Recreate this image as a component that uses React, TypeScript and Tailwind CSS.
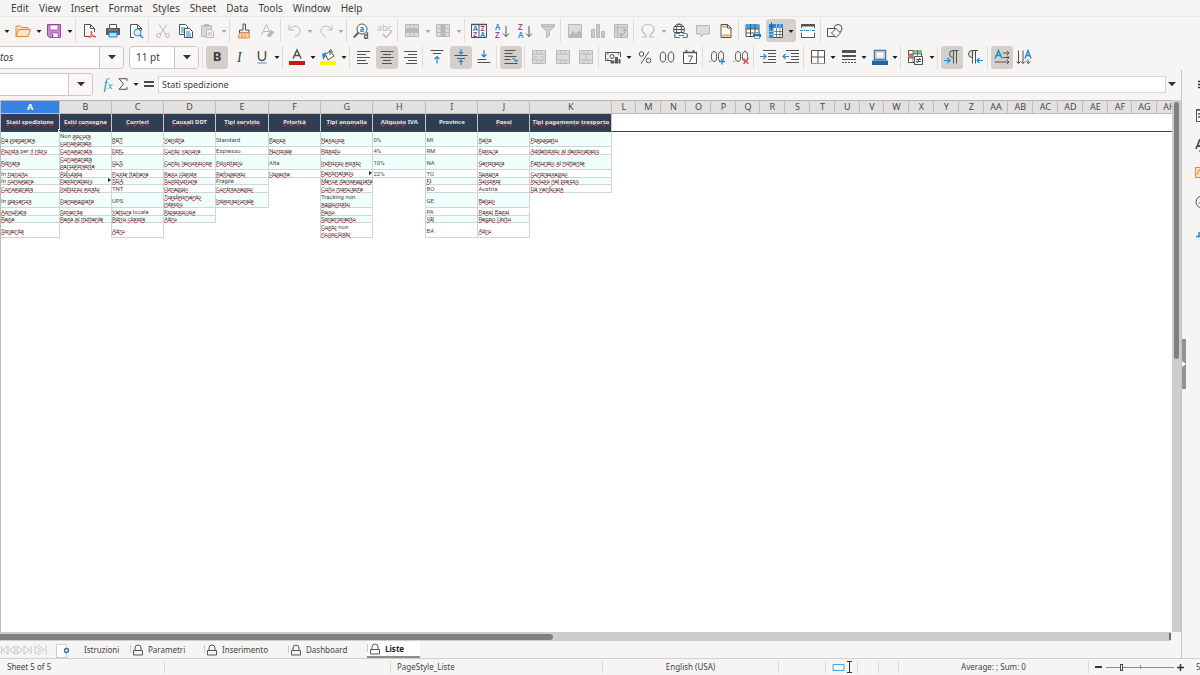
import type { ReactNode } from 'react';
import clsx from 'clsx';

const INK = '#525252';
const DIM = '#b9b9b7';
const BLUE = '#1e8bcd';
const PURPLE = '#a33ea1';
const ORANGE = '#e8873a';

const menus = ['Edit', 'View', 'Insert', 'Format', 'Styles', 'Sheet', 'Data', 'Tools', 'Window', 'Help'];

const icons: Record<string, ReactNode> = {
  open: (
    <>
      <path d="M1 13.500V3h4.500l1.500 1.500h6V7" fill="#f8dcb4" stroke={ORANGE} />
      <path d="M1 13.500 3.500 6.500h12l-2.500 7z" fill="#fbe3bd" stroke={ORANGE} />
    </>
  ),
  save: (
    <>
      <path d="M1.500 1.500h13v13h-11l-2-2z" fill="#c98bcb" stroke={PURPLE} />
      <path d="M4 2h8v5H4zM5 10h7v4.500H5z" fill="#fff" stroke={PURPLE} strokeWidth=".7" />
      <path d="M6.500 11v3.500" stroke={PURPLE} strokeWidth="1.500" />
    </>
  ),
  pdf: (
    <>
      <path d="M2.500 1.500h6l4 4V9M8.500 1.500v4h4M2.500 1.500v12H7" fill="none" stroke={INK} />
      <path d="M7 14.500c2-2 3.500-5 2.500-6s-1 4 4.500 5.500c-2-1.500-5-.5-7 .5z" fill="none" stroke="#dc3a35" />
    </>
  ),
  print: (
    <>
      <path d="M4.500 5V1.500h7V5" fill="#fff" stroke={INK} />
      <path d="M1 5h14v7H1z" fill="#5b5b5b" />
      <path d="M3 7h10" stroke="#9a9a9a" />
      <path d="M4 9.500h8v4.500H4z" fill="#b7ddf3" stroke={BLUE} />
    </>
  ),
  preview: (
    <>
      <path d="M6 14.500H2.500v-13h7l4 4v2M9.500 1.500v4h4" fill="#fff" stroke={INK} />
      <circle cx="9.500" cy="9.500" r="3.500" fill="#dff0fa" stroke={BLUE} />
      <path d="m12 12 3 3" stroke={BLUE} strokeWidth="1.500" />
    </>
  ),
  cut: (
    <g fill="none" stroke={DIM}>
      <path d="m4 1.500 7 10M12 1.500l-7 10" />
      <circle cx="3.500" cy="12.500" r="2" />
      <circle cx="12.500" cy="12.500" r="2" />
    </g>
  ),
  copy: (
    <>
      <path d="M1.500 1.500h6l2 2v8h-8z" fill="#fff" stroke={INK} />
      <path d="M3 5h4M3 7h4M3 9h3" stroke={BLUE} />
      <path d="M6.500 5.500h5l3 3v6h-8z" fill="#fff" stroke={INK} />
      <path d="M8 9h4M8 11h5M8 13h5" stroke={BLUE} />
    </>
  ),
  paste: (
    <>
      <path d="M1.500 2.500h10v11h-10z" fill="#d8d8d6" stroke={DIM} />
      <path d="M4 1h5v3H4z" fill={DIM} />
      <path d="M6.500 6.500h5l2 2v6h-7z" fill="#f3f3f1" stroke={DIM} />
      <path d="M8 10h4M8 12h4" stroke={DIM} />
    </>
  ),
  brush: (
    <>
      <path d="M7 1h2.500v6H13v3H3.500V7H7z" fill="#eee" stroke={INK} />
      <path d="M3.500 10h9.500l.5 5h-11z" fill="#f8d7ae" stroke={ORANGE} />
      <path d="M6 11.500V15M9 11.500V15" stroke={ORANGE} />
    </>
  ),
  clear: (
    <>
      <path d="m1.500 12 5-10.500L10 9M3.500 8.500H9" fill="none" stroke={DIM} />
      <path d="m7 12 4-5 3.500 2-4 5H8z" fill={DIM} />
    </>
  ),
  undo: <path d="M2 2v5h5M2 7c3-5 10-5 11 0 .5 3-2 5.500-5 7" fill="none" stroke={DIM} />,
  redo: <path d="M14 2v5H9M14 7c-3-5-10-5-11 0-.5 3 2 5.500 5 7" fill="none" stroke={DIM} />,
  find: (
    <>
      <circle cx="9" cy="6" r="5" fill="#fff" stroke={INK} />
      <path d="M5.500 9.500.8 14.300" stroke={INK} strokeWidth="1.800" />
      <text x="6.500" y="8.500" fontSize="8" fontWeight="700" fill={BLUE}>a</text>
      <text x="10.500" y="15.500" fontSize="8" fontWeight="700" fill={INK}>d</text>
    </>
  ),
  spell: (
    <>
      <text x="0" y="8" fontSize="9" fill={DIM}>abc</text>
      <path d="m6 11 3 3.500 6-6.500" fill="none" stroke={DIM} strokeWidth="1.400" />
    </>
  ),
  rows: (
    <>
      <path d="M1.500 1.500h13v12h-13z" fill="#ddd" stroke={DIM} />
      <path d="M1 5.500h14M1 9.500h14M6 1v13M10 1v13" stroke={DIM} />
      <path d="M2 6h12v3H2z" fill={DIM} />
    </>
  ),
  cols: (
    <>
      <path d="M1.500 1.500h13v12h-13z" fill="#ddd" stroke={DIM} />
      <path d="M1 5.500h14M1 9.500h14M6 1v13M10 1v13" stroke={DIM} />
      <path d="M6 2h4v12H6z" fill={DIM} />
    </>
  ),
  sort: (
    <>
      <path d="M.5 1.500h15v13H.500zM8 1.500v13" fill="#fff" stroke={INK} />
      <path d="M0 1.500h16" stroke={INK} strokeWidth="1.500" />
      <text x="2" y="8" fontSize="7" fontWeight="700" fill={BLUE}>A</text>
      <text x="2" y="14" fontSize="7" fontWeight="700" fill={PURPLE}>Z</text>
      <text x="9.500" y="8" fontSize="7" fontWeight="700" fill={PURPLE}>Z</text>
      <text x="9.300" y="14" fontSize="7" fontWeight="700" fill={BLUE}>A</text>
    </>
  ),
  asc: (
    <>
      <text x="1" y="7" fontSize="8" fontWeight="600" fill={BLUE}>A</text>
      <text x="1" y="15" fontSize="8" fontWeight="600" fill={PURPLE}>Z</text>
      <path d="M12 3v10.500M9 10.500l3 3 3-3" fill="none" stroke={INK} />
    </>
  ),
  desc: (
    <>
      <text x="1" y="7" fontSize="8" fontWeight="600" fill={PURPLE}>Z</text>
      <text x="1" y="15" fontSize="8" fontWeight="600" fill={BLUE}>A</text>
      <path d="M12 3v10.500M9 10.500l3 3 3-3" fill="none" stroke={INK} />
    </>
  ),
  filter: <path d="M1.500 1.500h13v2l-5 5v4l-3 2v-6l-5-5zM2 3.500h12" fill="#cfcfcd" stroke={DIM} />,
  image: (
    <>
      <path d="M1.500 1.500h13v13h-13z" fill="#dcdcda" stroke={DIM} />
      <path d="m2 13 4-5 3 3 3-4 2.500 3v4H2z" fill={DIM} />
    </>
  ),
  chart: <path d="M1.500 6.500h3v8h-3zM6.500 1.500h3v13h-3zM11.500 8.500h3v6h-3z" fill="#cbcbc9" stroke={DIM} />,
  pivot: (
    <>
      <path d="M1.500 1.500h13v13h-13z" fill="#d4d4d2" stroke={DIM} />
      <path d="M1 4.500h14M4.500 1v14" stroke={DIM} />
      <path d="M7 12c4 0 5-2 5-5M10 8l2-2 2 2M8.500 10 7 12l2 1.500" fill="none" stroke="#a5a5a3" />
    </>
  ),
  omega: <path d="M1.500 14h4.500v-2C3 10 2 8.500 2 6.500 2 3.500 4.500 1.500 8 1.500s6 2 6 5c0 2-1 3.500-4 5.500v2h4.500" fill="none" stroke={DIM} strokeWidth="1.200" />,
  link: (
    <>
      <g fill="none" stroke={INK}>
        <circle cx="7" cy="6.500" r="5.500" />
        <ellipse cx="7" cy="6.500" rx="2.500" ry="5.500" />
        <path d="M1.500 6.500h11M2.500 3.500h9M2.500 9.500h9" />
      </g>
      <path d="M3 10h12v5H3z" fill="#f6f5f4" />
      <path d="M8 10.500H4.500a2 2 0 0 0 0 4H8M10.500 10.500h3a2 2 0 0 1 0 4h-3M6.500 12.500h5.500" fill="none" stroke={BLUE} strokeWidth="1.200" />
    </>
  ),
  comment: <path d="M1.500 2.500h13v8.500H9L6 14v-3H1.500z" fill="#dcdcda" stroke={DIM} />,
  headfoot: (
    <>
      <path d="M3 1.500h6.500l3.500 3.500v9.500H3zM9.500 1.500V5H13" fill="#fff" stroke={INK} />
      <path d="M4 2.500h5v2H4zM4 11.500h8v2H4z" fill="#f0a455" />
    </>
  ),
  range: (
    <>
      <path d="M1 1.500h13v12H1z" fill="#fff" stroke={INK} />
      <path d="M1 1h13v5H1z" fill="#4aa3df" />
      <path d="M1 6h13M1 10h13M5.500 1v13M10 1v13" stroke={INK} />
      <path d="M8 11h8v3H8z" fill="#5b5b5b" />
      <path d="M9.500 9.500h5V11h-5zM9.500 13h5v2.500h-5z" fill="#fff" stroke={BLUE} strokeWidth=".7" />
    </>
  ),
  freeze: (
    <>
      <path d="M1.500 1.500h13v13h-13z" fill="#fff" stroke={INK} />
      <path d="M1 1h14v4H1zM1 1h4.500v14H1z" fill="#2f8fd4" />
      <path d="M6 8.500h9M6 11.500h9M8.500 5v10M12 5v10" stroke={INK} strokeWidth=".7" />
      <path d="M1 8.500h4M1 11.500h4M8.500 1v4M12 1v4" stroke="#bfe0f5" strokeWidth=".7" />
      <path d="M3.500-.5V6M.5 3h6" stroke="#1664a5" />
    </>
  ),
  split: (
    <>
      <path d="M1.500 5V1.500h13V5M1.500 10v4.500h13V10" fill="#fff" stroke={INK} />
      <path d="M1 2.500h14" stroke={INK} strokeWidth="2" />
      <path d="M0 7.500h16" stroke={BLUE} strokeDasharray="3 1 1 1" />
    </>
  ),
  shapes: (
    <g fill="#f6f5f4" stroke={INK}>
      <circle cx="11" cy="5.500" r="4" />
      <path d="M.5 5.500h8v8h-8z" />
      <path d="m9 5.500 4.500 4.500-4.500 4.500L4.500 10z" />
    </g>
  ),
  alignLeft: <path d="M1 2.500h13M1 5.500h9M1 8.500h13M1 11.500h9M1 14.500h11" stroke={INK} />,
  alignCenter: <path d="M1.500 2.500h13M4 5.500h8M1.500 8.500h13M4 11.500h8M3 14.500h10" stroke={INK} />,
  alignRight: <path d="M2 2.500h13M6 5.500h9M2 8.500h13M6 11.500h9M4 14.500h11" stroke={INK} />,
  top: (
    <>
      <path d="M1.500 1.500h13M4 4.500h8" stroke={INK} />
      <path d="M8 14.500v-7M5.500 10 8 7.500l2.500 2.500" fill="none" stroke={BLUE} strokeWidth="1.200" />
    </>
  ),
  middle: (
    <>
      <path d="M1.500 6.500h13M4 9.500h8" stroke={INK} />
      <path d="M8 0v5M6 3l2 2 2-2M8 16v-5M6 13l2-2 2 2" fill="none" stroke={BLUE} strokeWidth="1.200" />
    </>
  ),
  bottom: (
    <>
      <path d="M1.500 10.500h9M1.500 13.500h13" stroke={INK} />
      <path d="M8 1v7M5.500 5.500 8 8l2.500-2.500" fill="none" stroke={BLUE} strokeWidth="1.200" />
    </>
  ),
  wrap: (
    <>
      <path d="M1.500 1.500h11M1.500 4.500h8M1.500 7.500h12M1.500 10.500h6M1.500 14.500h13" stroke={INK} />
      <path d="M9 9.500c3 0 4 1 4.500 3M11 11l2.500 2L15 10.500" fill="none" stroke={BLUE} />
    </>
  ),
  mergeA: (
    <>
      <path d="M1.500 1.500h13v13h-13z" fill="#dcdcda" stroke={DIM} />
      <path d="M1 5h14M1 11h14M6 1v4M10 1v4M6 11v4M10 11v4M3 8h4M9 8h4" stroke={DIM} />
    </>
  ),
  mergeB: (
    <>
      <path d="M1.500 1.500h13v13h-13z" fill="#dcdcda" stroke={DIM} />
      <path d="M1 5h14M1 11h14M6 1v4M10 1v4M6 11v4M10 11v4" stroke={DIM} />
    </>
  ),
  mergeC: (
    <>
      <path d="M1.500 1.500h13v13h-13z" fill="#dcdcda" stroke={DIM} />
      <path d="M1 5h14M1 11h14M6 1v4M10 1v4M6 11v4M10 11v4M8 5v6" stroke={DIM} />
    </>
  ),
  currency: (
    <>
      <path d="M7 11.500H.500v-8h15V8" fill="none" stroke={INK} />
      <circle cx="7" cy="7.500" r="2" fill="none" stroke={INK} />
      <path d="M2 5h1.500M12.500 5H14M2 10h1.500" stroke={INK} />
      <path d="M5.500 11.500h4v3h-4zM10 8h3v6.500h-3zM13.500 10h2v4.500h-2z" fill="#5a5a5a" />
    </>
  ),
  percent: (
    <g fill="none" stroke={INK}>
      <circle cx="4.500" cy="5" r="2.300" />
      <circle cx="11.500" cy="11.500" r="2.300" />
      <path d="m12 2.500-8 12" />
    </g>
  ),
  number: (
    <g fill="none" stroke={INK}>
      <ellipse cx="4" cy="8" rx="2.800" ry="5" />
      <ellipse cx="12" cy="8" rx="2.800" ry="5" />
      <path d="M7.500 13.500h1" />
    </g>
  ),
  date: (
    <>
      <path d="M1.500 3.500h13v11h-13z" fill="#fff" stroke={INK} />
      <path d="M1 3.500h14M4.500 1v3M11.500 1v3" stroke={INK} strokeWidth="1.500" />
      <path d="M6 7h4.500L7.500 13" fill="none" stroke={INK} />
    </>
  ),
  addDec: (
    <>
      <g fill="none" stroke={INK}>
        <ellipse cx="5" cy="7.500" rx="2.600" ry="5" />
        <ellipse cx="12" cy="7.500" rx="2.600" ry="5" />
        <path d="M.5 12.500h1" />
      </g>
      <path d="M10 12.500h6M13 9.500v6" stroke={BLUE} strokeWidth="1.300" />
    </>
  ),
  delDec: (
    <>
      <g fill="none" stroke={INK}>
        <ellipse cx="5" cy="7.500" rx="2.600" ry="5" />
        <ellipse cx="12" cy="7.500" rx="2.600" ry="5" />
        <path d="M.5 12.500h1" />
      </g>
      <path d="m10.500 9.500 5 5.500M15.500 9.500l-5 5.500" stroke="#e24a45" strokeWidth="1.200" />
    </>
  ),
  indent: (
    <>
      <path d="M3 1.500h13M8 4.500h8M8 7.500h8M8 10.500h8M3 13.500h13" stroke={INK} />
      <path d="M0 7.500h6M3.500 5 6 7.500 3.500 10" fill="none" stroke={BLUE} strokeWidth="1.200" />
    </>
  ),
  outdent: (
    <>
      <path d="M3 1.500h13M8 4.500h8M8 7.500h8M8 10.500h8M3 13.500h13" stroke={INK} />
      <path d="M6 7.500H0M2.500 5 0 7.500 2.500 10" fill="none" stroke={BLUE} strokeWidth="1.200" />
    </>
  ),
  borders: (
    <>
      <path d="M1.500 14V1.500h13V14M8 1.500V14M1.500 8h13" fill="#fff" stroke={INK} />
      <path d="M1 14.500h14" stroke={ORANGE} />
    </>
  ),
  lines: (
    <>
      <path d="M1 2.500h14" stroke={INK} strokeWidth="3" />
      <path d="M1 7h14" stroke={INK} strokeWidth="2" />
      <path d="M1 10.500h14" stroke={INK} />
      <path d="M1 13.500h14" stroke={INK} strokeDasharray="2 1" />
    </>
  ),
  borderColor: (
    <>
      <path d="M2.500 1.500h11v9h-11z" fill="#fff" stroke="#2c7fc0" strokeWidth="1.500" />
      <path d="M4 3h8v6H4z" fill="#fff" stroke={DIM} />
      <path d="M0 11.500h16V16H0z" fill="#2065a3" />
    </>
  ),
  conditional: (
    <>
      <path d="M1.500 1.500h13v12h-13z" fill="#fff" stroke={INK} />
      <path d="M6 1h9v4H6z" fill="#7fc58a" />
      <path d="M1 5h5v4H1z" fill="#ea6c62" />
      <path d="M1 5h14M1 9h14M6 1v12M10.500 1v12" stroke={INK} strokeWidth=".7" />
      <path d="M7.500 7.500h8v8h-8z" fill="#fff" stroke={INK} />
      <path d="M9 10.500h5M9 12.500h5M13 9l-3 5" stroke={INK} />
    </>
  ),
  ltr: (
    <>
      <path d="M9 8.500a3.500 3.500 0 0 1 0-7h5.500M9.500 1.500v13M12.500 1.500v13" fill="#cfcbc6" stroke={INK} />
      <path d="M0 11.500h6M3.500 9 6 11.500 3.500 14" fill="none" stroke={BLUE} strokeWidth="1.200" />
    </>
  ),
  rtl: (
    <>
      <path d="M5 8.500a3.500 3.500 0 0 1 0-7h6M5.500 1.500v13M8.500 1.500v13" fill="#e0e0de" stroke={INK} />
      <path d="M16 11.500h-6M12.500 9 10 11.500l2.500 2.500" fill="none" stroke={BLUE} strokeWidth="1.200" />
    </>
  ),
  textLtr: (
    <>
      <path d="m1 9.500 3.500-8 3.500 8M2.500 6.500H7" fill="none" stroke={BLUE} strokeWidth="1.400" />
      <path d="M9 4h6M13 2l2 2-2 2M9 8.500h6M13 6.500l2 2-2 2M1 13h14M13 11l2 2-2 2" fill="none" stroke={INK} />
    </>
  ),
  textTtb: (
    <>
      <path d="m9 9.500 3-8 3 8M10 6.500h4" fill="none" stroke={BLUE} strokeWidth="1.400" />
      <path d="M2.500 1.500v13M.5 12.500l2 2 2-2M7 1.500v13M5 12.500l2 2 2-2M12 10.500v4M10.500 12.500l2 2 2-2" fill="none" stroke={INK} />
    </>
  ),
  underline: (
    <>
      <path d="M4.500 2v6a3.500 3.500 0 0 0 7 0V2" fill="none" stroke={INK} strokeWidth="1.500" />
      <path d="M3.500 14h9" stroke="#6db7e8" strokeWidth="1.500" />
    </>
  ),
  fontColor: (
    <>
      <path d="m4 9.500 4-8.500 4 8.500M5.500 6.500h5" fill="none" stroke={INK} strokeWidth="1.500" />
      <path d="M0 12h16v4H0z" fill="#c01c1c" />
    </>
  ),
  fill: (
    <>
      <path d="M5.500 5.500 10 2l4 5-6 4z" fill="#fff" stroke={INK} />
      <path d="m6 7-3 4-1-6 4-2z" fill="#2f8fd4" />
      <path d="M10 6V.8c2 0 2 1 2 3" fill="none" stroke={INK} />
      <path d="M0 12h16v4H0z" fill="#fdf800" />
    </>
  ),
};

function Icon({ name }: { name: string }) {
  return (
    <svg viewBox="0 0 16 16" className="h-4 w-4 shrink-0 overflow-visible" aria-hidden="true">
      {icons[name]}
    </svg>
  );
}

function Caret({ dim }: { dim?: boolean }) {
  return (
    <svg viewBox="0 0 8 8" className="h-2 w-2 shrink-0" aria-hidden="true">
      <path d="M1.500 3h5L4 6z" fill={dim ? '#a8a8a6' : '#1c1c1c'} />
    </svg>
  );
}

function Chevron() {
  return (
    <svg viewBox="0 0 10 6" className="h-[6px] w-[10px] shrink-0" aria-hidden="true">
      <path d="M1 1h8L5 5.200z" fill="#2e3436" />
    </svg>
  );
}

// "v" is a live drop-down arrow, "-" a disabled one; a leading "*" marks a pressed button
function Group({ width, items, last }: { width: number; items: string[]; last?: boolean }) {
  return (
    <div className={clsx('flex h-[23px] shrink-0 items-center pr-px pl-[3px]', last ? '' : 'justify-between border-r border-[#e0dedb]')} style={{ width }}>
      {items.map((item, i) => {
        if (item === 'v' || item === '-') {
          return (
            <button key={i} aria-label="More options" className="flex h-full w-2 shrink-0 items-center">
              <Caret dim={item === '-'} />
            </button>
          );
        }
        if (item === 'freeze') {
          return (
            <div key={i} className="flex h-full w-[30px] shrink-0 items-center justify-between rounded-[3px] bg-[#d3cfcb] pl-[2px]">
              <button aria-label="freeze"><Icon name="freeze" /></button>
              <button aria-label="Freeze options" className="pr-px"><Caret /></button>
            </div>
          );
        }
        const pressed = item.startsWith('*');
        const name = pressed ? item.slice(1) : item;
        return (
          <button
            key={i}
            aria-label={name}
            className={clsx('flex h-full w-[22px] shrink-0 items-center justify-center rounded-[3px] text-[14px]', pressed && 'bg-[#d3cfcb]')}
          >
            {name === 'B' && <b className="text-[13px] text-[#3c3c3c]">B</b>}
            {name === 'I' && <i className="font-['Liberation_Serif'] text-[#444]">I</i>}
            {icons[name] && <Icon name={name} />}
          </button>
        );
      })}
    </div>
  );
}

const standardBar: [number, string[]][] = [
  [76, ['v', 'open', 'v', 'save', 'v']],
  [73, ['pdf', 'print', 'preview']],
  [81, ['cut', 'copy', 'paste', '-']],
  [51, ['brush', 'clear']],
  [66, ['undo', '-', 'redo', '-']],
  [51, ['find', 'spell']],
  [67, ['rows', '-', 'cols', '-']],
  [96, ['sort', 'asc', 'desc', 'filter']],
  [73, ['image', 'chart', 'pivot']],
  [105, ['omega', '-', 'link', 'comment', 'headfoot']],
  [82, ['range', 'freeze', 'split']],
  [30, ['shapes']],
];

const formatBar: [number, string[]][] = [
  [80, ['*B', 'I', 'underline', 'v']],
  [67, ['fontColor', 'v', 'fill', 'v']],
  [73, ['alignLeft', '*alignCenter', 'alignRight']],
  [74, ['top', '*middle', 'bottom']],
  [28, ['*wrap']],
  [74, ['mergeA', 'mergeB', 'mergeC']],
  [104, ['currency', 'v', 'percent', 'number', 'date']],
  [51, ['addDec', 'delDec']],
  [50, ['indent', 'outdent']],
  [97, ['borders', 'v', 'lines', 'v', 'borderColor', 'v']],
  [37, ['conditional', 'v']],
  [50, ['*ltr', 'rtl']],
  [50, ['*textLtr', 'textTtb']],
];

const lists: { title: string; width: number; values: string[] }[] = [
  { title: 'Stati spedizione', width: 59, values: ['Da preparare', 'Pronta per il ritiro', 'Ritirata', 'In transito', 'In consegna', 'Consegnata', 'In giacenza', 'Annullata', 'Resa', 'Smarrita'] },
  { title: 'Esiti consegna', width: 52, values: ['Non ancora consegnata', 'Consegnata', 'Consegnata parzialmente', 'Rifiutata', 'Destinatario', 'Indirizzo errato', 'Danneggiata', 'Smarrita', 'Resa al mittente'] },
  { title: 'Corrieri', width: 52, values: ['BRT', 'DHL', 'GLS', 'Poste Italiane', 'SDA', 'TNT', 'UPS', 'Vettore locale', 'Ritiro cliente', 'Altro'] },
  { title: 'Causali DDT', width: 52, values: ['Vendita', 'Conto visione', 'Conto lavorazione', 'Reso cliente', 'Sostituzione', 'Omaggio', 'Trasferimento interno', 'Riparazione', 'Altro'] },
  { title: 'Tipi servizio', width: 53, values: ['Standard', 'Espresso', 'Prioritario', 'Refrigerato', 'Fragile', 'Contrassegno', 'Internazionale'] },
  { title: 'Priorità', width: 52, values: ['Bassa', 'Normale', 'Alta', 'Urgente'] },
  { title: 'Tipi anomalia', width: 52, values: ['Nessuna', 'Ritardo', 'Indirizzo errato', 'Destinatario', 'Merce danneggiata', 'Collo mancante', 'Tracking non aggiornato', 'Reso', 'Smarrimento', 'Costo non riconciliato'] },
  { title: 'Aliquote IVA', width: 53, values: ['0%', '4%', '10%', '22%'] },
  { title: 'Province', width: 52, values: ['MI', 'RM', 'NA', 'TO', 'FI', 'BO', 'GE', 'PA', 'VR', 'BA'] },
  { title: 'Paesi', width: 52, values: ['Italia', 'Francia', 'Germania', 'Spagna', 'Svizzera', 'Austria', 'Belgio', 'Paesi Bassi', 'Regno Unito', 'Altro'] },
  { title: 'Tipi pagamento trasporto', width: 82, values: ['Prepagato', 'Addebitato al destinatario', 'Fatturato al mittente', 'Contrassegno', 'Incluso nel prezzo', 'Da verificare'] },
];

const emptyCols = ['L', 'M', 'N', 'O', 'P', 'Q', 'R', 'S', 'T', 'U', 'V', 'W', 'X', 'Y', 'Z', 'AA', 'AB', 'AC', 'AD', 'AE', 'AF', 'AG', 'AH'];
const rowHeights = [15, 8, 15, 8, 7, 8, 15, 8, 7, 15];

const known = new Set(['In', 'per', 'Non', 'non', 'locale', 'TNT', 'UPS', 'DDT', 'IVA', 'Standard', 'Espresso', 'Fragile', 'Alta', 'Tracking', 'Austria', 'Province', 'MI', 'RM', 'NA', 'TO', 'BO', 'GE', 'PA', 'BA', '0%', '4%', '10%', '22%']);

function Words({ text }: { text: string }) {
  return (
    <>
      {text.split(' ').map((word, i) => (
        <span key={i}>
          {i > 0 && ' '}
          <span className={known.has(word) ? '' : 'underline decoration-[#d63a40] decoration-wavy decoration-1 underline-offset-[-2px] [text-decoration-skip-ink:none]'}>
            {word}
          </span>
        </span>
      ))}
    </>
  );
}

function Sheet() {
  return (
    <table className="w-max table-fixed border-separate border-spacing-0">
      <colgroup>
        {lists.map((list) => (
          <col key={list.title} style={{ width: list.width }} />
        ))}
        {emptyCols.map((col, i) => (
          <col key={col} style={{ width: i % 5 === 0 ? 24 : 25 }} />
        ))}
      </colgroup>
      <thead>
        <tr className="h-[14px] text-[9px] leading-[12px] text-[#4a4a4a]">
          {[...'ABCDEFGHIJK', ...emptyCols].map((col) => (
            <th
              key={col}
              className={clsx(
                'h-[14px] border-t border-r border-b border-t-[#b5b5b5] border-r-[#bdbdbd] border-b-[#bdbdbd] p-0',
                col === 'A' ? 'bg-[#3584e4] font-bold text-white' : 'bg-[#e2e1df] font-normal',
              )}
            >
              {col}
            </th>
          ))}
        </tr>
      </thead>
      <tbody>
        <tr>
          {lists.map((list, i) => (
            <td key={list.title} className="relative border-r border-b border-r-[#c4c8cd] border-b-[#444] bg-[#2f3e53] p-0 text-center text-[6px] font-bold text-[#e4e6e9]">
              <div className="flex h-[17px] items-center justify-center whitespace-nowrap">
                <span><Words text={list.title} /></span>
              </div>
              {i === 0 && <span className="absolute -right-[2px] -bottom-px h-[3px] w-[3px] border border-white bg-[#2f3e53]" />}
            </td>
          ))}
          <td colSpan={emptyCols.length} className="border-b border-[#444] p-0" />
        </tr>
        {rowHeights.map((height, r) => (
          <tr key={r}>
            {lists.map((list, c) => {
              const value = list.values[r];
              const spill = value === 'Destinatario';
              const short = height < 10;
              return (
                <td
                  key={list.title}
                  className={clsx(
                    "relative border-[#d0d6d6] p-0 font-['Roboto'] text-[6px] text-[#4a4a4a]",
                    value && 'border-r border-b',
                    !value && lists[c + 1]?.values[r] && 'border-r',
                    value && r % 2 === 0 && 'bg-[#effffb]',
                  )}
                >
                  {value && (
                    <div
                      className={clsx('flex', spill ? 'items-start' : 'items-center', short ? 'leading-[6px] whitespace-nowrap' : 'leading-[7px]')}
                      style={{ height: height - 1 }}
                    >
                      <span><Words text={value} /></span>
                    </div>
                  )}
                  {spill && (
                    <svg viewBox="0 0 3 4" className="absolute right-0 bottom-[2px] h-1 w-[3px]" aria-hidden="true">
                      <path d="M0 0v4l3-2z" fill="#222" />
                    </svg>
                  )}
                </td>
              );
            })}
          </tr>
        ))}
      </tbody>
    </table>
  );
}

const tabs = [
  { name: 'Istruzioni', width: 52 },
  { name: 'Parametri', width: 74 },
  { name: 'Inserimento', width: 84 },
  { name: 'Dashboard', width: 79 },
  { name: 'Liste', width: 53 },
];

function SheetTabs() {
  return (
    <div className="flex h-[17px] shrink-0 items-center">
      <button aria-label="Scroll sheets" className="w-12 shrink-0">
        <svg viewBox="0 0 48 12" className="h-3 w-12" fill="none" stroke="#c6c6c4">
          <path d="M1.500 2v8M8 2 2.500 6 8 10zM15 2 9.500 6l5.500 4zM17 2l5.500 4-5.500 4zM24 2l5.500 4-5.500 4zM31 2v8M35 2l6 4-6 4zM38 1l6 5-6 5M46 1v10" />
        </svg>
      </button>
      <button aria-label="Add sheet" className="ml-2 w-4 shrink-0">
        <svg viewBox="0 0 16 16" className="h-4 w-4">
          <path d="M.5 2.500h10v13H.500z" fill="#fff" stroke="#d0d0ce" />
          <circle cx="10.500" cy="8.500" r="2" fill="#fff" stroke="#2c6fb5" strokeWidth="1.400" />
        </svg>
      </button>
      <div className="ml-[6px] flex h-full" role="tablist">
        {tabs.map((tab, i) => {
          const active = tab.name === 'Liste';
          return (
            <button
              key={tab.name}
              role="tab"
              aria-selected={active}
              style={{ width: tab.width }}
              className={clsx(
                'flex h-full shrink-0 items-center text-left text-[8px] leading-[12px]',
                active ? 'border-b-2 border-[#8b8e8b] bg-white font-bold text-[#222]' : 'text-[#444]',
                i === 0 && 'pl-[6px]',
              )}
            >
              {i > 0 && (
                <svg viewBox="0 0 16 14" className="mr-[2px] h-[14px] w-4 shrink-0" fill="none" aria-hidden="true">
                  <path d="M.5 2v8" stroke="#c9c9c7" />
                  <path d="M3.500 7.500h9v4.500h-9zM5 7.500V5a3 3 0 0 1 6 0v2.500" stroke="#555" />
                </svg>
              )}
              {tab.name}
            </button>
          );
        })}
      </div>
    </div>
  );
}

function StatusBar() {
  return (
    <footer className="flex h-[17px] shrink-0 items-center overflow-hidden border-t border-[#cfcfcd] text-[8px] leading-[12px] text-[#444]">
      <span className="w-[165px] shrink-0 border-r border-[#dddbd8] pl-[7px]">Sheet 5 of 5</span>
      <span className="w-[226px] shrink-0 border-r border-[#dddbd8]">&nbsp;</span>
      <span className="w-[212px] shrink-0 border-r border-[#dddbd8] pl-[6px]">PageStyle_Liste</span>
      <span className="w-[176px] shrink-0 border-r border-[#dddbd8] text-center">English (USA)</span>
      <span className="w-[47px] shrink-0 border-r border-[#dddbd8]">&nbsp;</span>
      <span className="flex h-3 w-8 shrink-0 items-center border-r border-[#dddbd8] pl-[6px]">
        <svg viewBox="0 0 20 12" className="h-3 w-5 shrink-0" fill="none" aria-hidden="true">
          <path d="M1 3.500h11v6H1z" stroke="#4aa3d8" />
          <path d="M15 .5h5M15 11.500h5M17.500 1v10" stroke="#333" />
        </svg>
      </span>
      <span className="w-[21px] shrink-0 border-r border-[#dddbd8]">&nbsp;</span>
      <span className="w-5 shrink-0 border-r border-[#dddbd8]">&nbsp;</span>
      <span className="min-w-0 flex-1 truncate border-r border-[#dddbd8] text-center">Average: ; Sum: 0</span>
      <div className="flex w-[111px] shrink-0 items-center pl-[6px]">
        <button aria-label="Zoom out" className="h-[2px] w-[7px] shrink-0 bg-[#333]" />
        <label className="relative ml-1 flex h-3 w-[68px] shrink-0 items-center">
          <span className="sr-only">Zoom</span>
          <input
            type="range"
            defaultValue={22}
            className="h-px w-full appearance-none bg-[#8a8a88] [&::-webkit-slider-thumb]:h-[7px] [&::-webkit-slider-thumb]:w-[3px] [&::-webkit-slider-thumb]:appearance-none [&::-webkit-slider-thumb]:border [&::-webkit-slider-thumb]:border-[#444] [&::-webkit-slider-thumb]:bg-white"
          />
          <span className="absolute left-1/2 h-1 w-px bg-[#8a8a88]" />
        </label>
        <button aria-label="Zoom in" className="ml-[3px] shrink-0">
          <svg viewBox="0 0 7 7" className="h-[7px] w-[7px]">
            <path d="M0 3.500h7M3.500 0v7" stroke="#333" strokeWidth="1.500" />
          </svg>
        </button>
        <span className="ml-3 shrink-0">55%</span>
      </div>
    </footer>
  );
}

function Sidebar() {
  return (
    <aside className="relative w-[19px] shrink-0 overflow-hidden border-l border-[#c4c4c2]">
      <svg viewBox="0 0 18 180" className="h-[180px] w-[18px]" fill="none" aria-hidden="true">
        <path d="M16 11.500h6M16 14.500h6M16 17.500h6" stroke="#333" strokeWidth="1.500" />
        <path d="M14.500 39.500h8v12h-8z" fill="#fff" stroke={INK} />
        <path d="M14 40h8M16 44h4M16 47h4" stroke={INK} strokeWidth="1.500" />
        <path d="m14 79 4-10M15.500 76H20" stroke={INK} strokeWidth="1.800" />
        <path d="M17 81h3" stroke={BLUE} strokeWidth="1.500" />
        <path d="M13.500 97.500h8v10h-8z" fill="#fbe3bd" stroke={ORANGE} />
        <path d="m15 105 2-5h4" stroke={ORANGE} />
        <circle cx="20" cy="132" r="6" stroke={INK} />
        <path d="m16.500 134 4-4" stroke={BLUE} />
        <path d="M14 166.500h4M17 162v4" stroke={BLUE} strokeWidth="1.500" />
      </svg>
      <button aria-label="Hide sidebar" className="absolute top-[269px] left-0 flex h-[50px] w-1 items-center bg-[#919391]">
        <svg viewBox="0 0 4 6" className="h-[6px] w-1"><path d="M0 0v6l4-3z" fill="#fff" /></svg>
      </button>
    </aside>
  );
}

export default function App() {
  return (
    <div className="flex h-screen w-full flex-col overflow-hidden bg-[#f6f5f4] font-['Noto_Sans',sans-serif] text-[#3c3c3c]">
      <nav className="flex h-[17px] shrink-0 items-center gap-[10px] border-b border-[#e9e7e5] pl-[11px] text-[10px] leading-[14px]">
        {menus.map((menu) => (
          <button key={menu}>{menu}</button>
        ))}
      </nav>

      {/* Standard toolbar */}
      <div className="flex h-[27px] shrink-0 items-center">
        {standardBar.map(([width, items], i) => (
          <Group key={i} width={width} items={items} last={i === standardBar.length - 1} />
        ))}
      </div>

      {/* Formatting toolbar */}
      <div className="flex h-[26px] shrink-0 items-center">
        <div className="flex h-[23px] w-[124px] shrink-0 overflow-hidden rounded-r-[4px] border border-l-0 border-[#cdc7c2] bg-white">
          <input aria-label="Font name" defaultValue="tos" className="min-w-0 flex-1 text-[10px] italic" />
          <button aria-label="Choose font" className="flex w-6 items-center justify-center border-l border-[#cdc7c2] bg-[#f8f7f6]"><Chevron /></button>
        </div>
        <div className="ml-[5px] flex h-[23px] w-[70px] shrink-0 overflow-hidden rounded-[4px] border border-[#cdc7c2] bg-white">
          <input aria-label="Font size" defaultValue="11 pt" className="min-w-0 flex-1 pl-[6px] text-[10px]" />
          <button aria-label="Choose size" className="flex w-6 items-center justify-center border-l border-[#cdc7c2] bg-[#f8f7f6]"><Chevron /></button>
        </div>
        <div className="h-[23px] w-1 shrink-0 border-r border-[#e0dedb]" />
        {formatBar.map(([width, items], i) => (
          <Group key={i} width={width} items={items} last={i === formatBar.length - 1} />
        ))}
      </div>

      <div className="flex min-h-0 flex-1">
        <main className="flex min-w-0 flex-1 flex-col">
          {/* Formula bar */}
          <div className="flex h-[30px] shrink-0 items-center pb-[2px]">
            <div className="flex h-[23px] w-[93px] shrink-0 overflow-hidden rounded-r-[4px] border border-l-0 border-[#cdc7c2] bg-white">
              <input aria-label="Name box" className="min-w-0 flex-1 text-[10px]" />
              <button aria-label="Named ranges" className="flex w-6 items-center justify-center border-l border-[#cdc7c2] bg-[#f8f7f6]"><Chevron /></button>
            </div>
            <button aria-label="Function wizard" className="ml-[9px] w-3 shrink-0 font-['Liberation_Serif'] text-[15px] leading-4 text-[#2d8fd0] italic">
              f<span className="text-[11px]">x</span>
            </button>
            <button aria-label="Sum" className="ml-1 flex w-[22px] shrink-0 items-center justify-between">
              <svg viewBox="0 0 10 12" className="h-3 w-[10px]" fill="none">
                <path d="M9 3V.7H1L5.500 6 1 11.300h8V9" stroke={INK} />
              </svg>
              <Caret />
            </button>
            <button aria-label="Formula" className="mx-1 h-[6px] w-[10px] shrink-0 border-y-2 border-[#4a4a4a]" />
            <input
              aria-label="Cell content"
              defaultValue="Stati spedizione"
              className="h-[17px] min-w-0 flex-1 border border-[#d8d5d2] bg-white pl-[3px] text-[9px] leading-[13px]"
            />
            <button aria-label="Expand formula bar" className="flex w-[15px] shrink-0 items-center pl-px"><Chevron /></button>
          </div>

          <div className="flex min-h-0 flex-1">
            <div className="min-w-0 flex-1 overflow-hidden border-l border-[#b9b9b7] bg-white">
              <Sheet />
            </div>
            <div className="w-[9px] shrink-0 bg-[#cdcdcc] px-[2px] pt-[2px]">
              <div className="h-[257px] rounded-full bg-[#7f817f]" />
            </div>
          </div>
          <div className="mr-[10px] flex h-[9px] shrink-0 items-center justify-between bg-[#cdcdcc]">
            <div className="h-[6px] w-[553px] rounded-r-full bg-[#7f817f]" />
            <div className="h-[7px] w-[2px] bg-[#6e706e]" />
          </div>
          <SheetTabs />
        </main>
        <Sidebar />
      </div>

      <StatusBar />
    </div>
  );
}
